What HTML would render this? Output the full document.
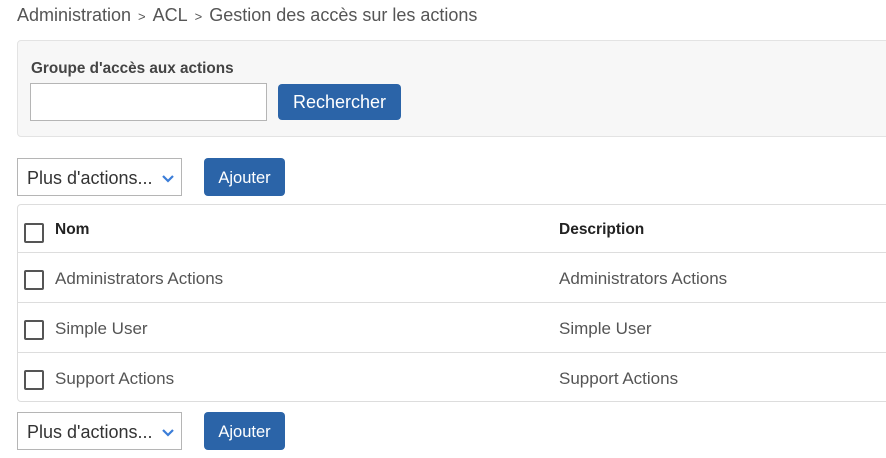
<!DOCTYPE html>
<html><head><meta charset="utf-8"><style>
*{box-sizing:border-box;margin:0;padding:0}
body{width:886px;height:458px;overflow:hidden;background:#fff;font-family:"Liberation Sans",Arial,sans-serif;position:relative}
.abs{position:absolute}
.bc{left:17px;top:5px;font-size:18px;color:#555;white-space:nowrap}
.bc span{font-size:13px;margin:0 7px}
.panel{left:17px;top:40px;width:880px;height:97px;background:#f7f7f7;border:1px solid #e3e3e3;border-radius:4px}
.lbl{left:31px;top:60px;font-size:15.3px;font-weight:bold;color:#444}
.inp{left:30px;top:83px;width:237px;height:38px;border:1px solid #b5b5b5;background:#fff}
.btn{background:#2b64a8;color:#fff;border-radius:4px;text-align:center}
.sel{width:165px;height:38px;border:1px solid #b5b5b5;background:#fff;font-size:18px;color:#333;padding:9px 0 0 9px}
.sel svg{position:absolute;right:6px;top:15px}
.tbl{left:17px;top:204px;width:880px;height:198px;border:1px solid #ddd;border-radius:4px}
.row{position:absolute;left:0;width:100%;border-bottom:1px solid #ddd}
.cb{position:absolute;left:6px;width:20px;height:20px;border:2px solid #555;border-radius:2px}
.t{position:absolute;font-size:17px;color:#555}
.h{font-weight:bold;color:#222;font-size:15.5px}
</style></head><body>
<div class="abs bc">Administration<span>&gt;</span>ACL<span>&gt;</span>Gestion des accès sur les actions</div>
<div class="abs panel"></div>
<div class="abs lbl">Groupe d'accès aux actions</div>
<div class="abs inp"></div>
<div class="abs btn" style="left:278px;top:84px;width:123px;height:36px;font-size:18px;line-height:37px">Rechercher</div>

<div class="abs sel" style="left:17px;top:158px">Plus d'actions...<svg width="14" height="9" viewBox="0 0 14 9"><path d="M2 2l5 5 5-5" stroke="#3b7dd8" stroke-width="2.2" fill="none"/></svg></div>
<div class="abs btn" style="left:204px;top:158px;width:81px;height:38px;font-size:16.5px;line-height:40px">Ajouter</div>

<div class="abs tbl">
 <div class="row" style="top:0;height:48px"><div class="cb" style="top:18px"></div><div class="t h" style="left:37px;top:16px">Nom</div><div class="t h" style="left:541px;top:16px">Description</div></div>
 <div class="row" style="top:48px;height:50px"><div class="cb" style="top:17px"></div><div class="t" style="left:37px;top:16px">Administrators Actions</div><div class="t" style="left:541px;top:16px">Administrators Actions</div></div>
 <div class="row" style="top:98px;height:50px"><div class="cb" style="top:17px"></div><div class="t" style="left:37px;top:16px">Simple User</div><div class="t" style="left:541px;top:16px">Simple User</div></div>
 <div class="row" style="top:148px;height:49px;border-bottom:none"><div class="cb" style="top:17px"></div><div class="t" style="left:37px;top:16px">Support Actions</div><div class="t" style="left:541px;top:16px">Support Actions</div></div>
</div>

<div class="abs sel" style="left:17px;top:412px">Plus d'actions...<svg width="14" height="9" viewBox="0 0 14 9"><path d="M2 2l5 5 5-5" stroke="#3b7dd8" stroke-width="2.2" fill="none"/></svg></div>
<div class="abs btn" style="left:204px;top:412px;width:81px;height:38px;font-size:16.5px;line-height:40px">Ajouter</div>
</body></html>
